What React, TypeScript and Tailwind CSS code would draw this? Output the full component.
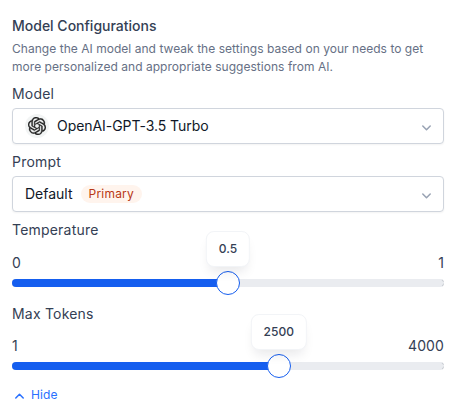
import type { ReactNode } from "react";
import { SiOpenai } from "react-icons/si";

function Chevron({ up = false, className = "" }: { up?: boolean; className?: string }) {
  return (
    <svg viewBox="0 0 9 6" fill="none" stroke="currentColor" className={className}>
      <path d={up ? "M.8 5 4.5 1.3 8.2 5" : "M.8 1 4.5 4.7 8.2 1"} strokeWidth="1.5" strokeLinecap="round" strokeLinejoin="round" />
    </svg>
  );
}

function Field({ label, children }: { label: string; children: ReactNode }) {
  return (
    <div className="mb-2 flex flex-col gap-1">
      <div className="text-sm leading-5 tracking-[0.2px]">{label}</div>
      <div className="flex h-9 items-center rounded border border-[#d0d5dd] bg-white pr-3 pl-3 text-[#101828] shadow-xs">
        {children}
        <Chevron className="mt-[3px] ml-auto h-[6px] w-[9px] text-[#98a2b3]" />
      </div>
    </div>
  );
}

interface SliderProps {
  label: string;
  min: number;
  max: number;
  value: number;
  percent: number;
  gap: string;
}

function RangeSlider({ label, min, max, value, percent, gap }: SliderProps) {
  return (
    <div className="flex flex-col">
      <div className="text-sm leading-5 tracking-[0.2px]">{label}</div>
      <div className={`${gap} flex justify-between text-sm leading-5 tracking-[0.1px]`}>
        <span>{min}</span>
        <span>{max}</span>
      </div>
      <div className="relative mt-1.5 h-2 rounded-[4px] border border-dashed border-[#c8ccd2] bg-[#eaecf0]">
        <div className="absolute -inset-px overflow-hidden rounded-l-[4px]">
          <div className="mr-[3px] h-2 bg-[#eaecf0]" />
          <div className="-mt-2 h-2 bg-[#155eef]" style={{ width: `${percent}%` }} />
        </div>
        <div
          className="absolute -top-[9px] size-6 -translate-x-1/2 rounded-full border border-[#155eef] bg-white"
          style={{ left: `${percent}%` }}
        />
        <div
          className="absolute -top-[49px] flex h-9 -translate-x-1/2 items-center rounded-lg border border-[#f2f4f7] bg-white px-3 text-xs font-medium shadow-[0_8px_12px_-4px_rgba(16,24,40,0.1)]"
          style={{ left: `${percent}%` }}
        >
          {value}
        </div>
      </div>
    </div>
  );
}

export default function App() {
  return (
    <main className="h-[417px] w-[454px] bg-white pt-4 pl-3 font-['Inter',sans-serif] text-[#344054]">
      <div className="w-[432px]">
        <h1 className="text-sm leading-5 font-medium">Model Configurations</h1>
        <p className="mt-1 mb-2 text-xs leading-[18px] tracking-[0.035px] whitespace-nowrap text-[#667085]">
          Change the AI model and tweak the settings based on your needs to get
          <br />
          more personalized and appropriate suggestions from AI.
        </p>
        <Field label="Model">
          <span className="flex size-6 items-center justify-center rounded-full bg-[#f2f4f4] text-[#222]">
            <SiOpenai size={18} strokeWidth={0.4} />
          </span>
          <span className="ml-2 text-sm leading-5 tracking-[-0.05px]">OpenAI-GPT-3.5 Turbo</span>
        </Field>
        <Field label="Prompt">
          <span className="text-sm leading-5">Default</span>
          <span className="ml-2 flex h-[18px] items-center rounded-full bg-[#fff4ed] px-2 text-xs tracking-[0.2px] text-[#b93815]">
            Primary
          </span>
        </Field>
        <div className="flex flex-col gap-[17px]">
          <RangeSlider label="Temperature" min={0} max={1} value={0.5} percent={50} gap="mt-[13px]" />
          <RangeSlider label="Max Tokens" min={1} max={4000} value={2500} percent={61.8} gap="mt-3" />
        </div>
        <button className="mt-4 ml-[3px] flex items-center gap-[7px] text-xs leading-[18px] tracking-[0.15px] text-[#2970ff]">
          <Chevron up className="mt-px h-[6px] w-[9px]" />
          Hide
        </button>
      </div>
    </main>
  );
}
